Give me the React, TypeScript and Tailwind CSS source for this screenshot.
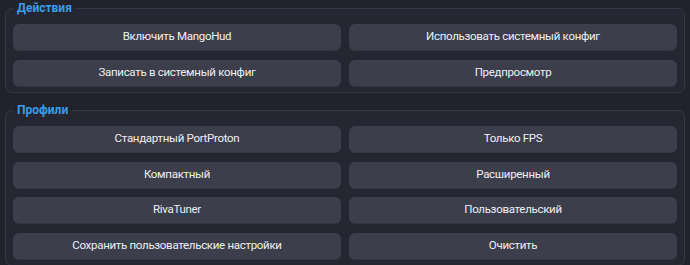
import React from 'react';

const actions = [
    'Включить MangoHud',
    'Использовать системный конфиг',
    'Записать в системный конфиг',
    'Предпросмотр',
];

const profiles = [
    'Стандартный PortProton',
    'Только FPS',
    'Компактный',
    'Расширенный',
    'RivaTuner',
    'Пользовательский',
    'Сохранить пользовательские настройки',
    'Очистить',
];

function ActionButton({ label }: { label: string }) {
    return (
        <button className="h-[27px] rounded-[6px] bg-[#3d3e4b] border-b border-[#35363f] text-[11.5px] tracking-[-0.3px] text-[#eeeff4] flex items-center justify-center">
            {label}
        </button>
    );
}

function Group({ title, items, rowGap }: { title: string; items: string[]; rowGap: string }) {
    return (
        <fieldset className="mx-[5px] border border-[#353746] rounded-[7px] bg-[#252631] px-[7px] pt-[8px] pb-[5px]">
            <legend className="px-[4px] h-[16px] leading-[16px] text-[12px] font-bold text-[#3a9ce8]">
                {title}
            </legend>
            <div className={`grid grid-cols-2 gap-x-[8px] ${rowGap}`}>
                {items.map((item) => (
                    <ActionButton key={item} label={item} />
                ))}
            </div>
        </fieldset>
    );
}

export default function App() {
    return (
        <div
            className="w-[690px] h-[265px] overflow-hidden bg-[#21222c] flex flex-col gap-[9px]"
            style={{ fontFamily: 'Roboto, sans-serif' }}
        >
            <Group title="Действия" items={actions} rowGap="gap-y-[9px]" />
            <Group title="Профили" items={profiles} rowGap="gap-y-[8.5px]" />
        </div>
    );
}
